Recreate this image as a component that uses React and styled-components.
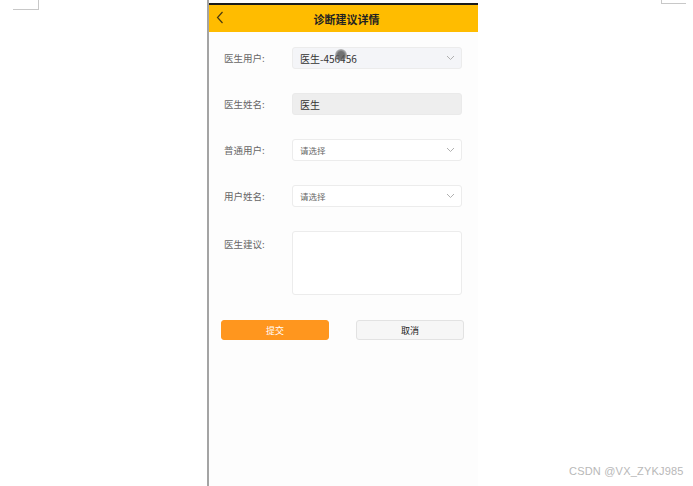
import React from 'react';
import styled, { createGlobalStyle } from 'styled-components';

const GlobalStyle = createGlobalStyle`
  html, body {
    margin: 0;
    padding: 0;
    background: #ffffff;
  }
  body {
    font-family: "Noto Sans CJK SC", "Noto Sans", sans-serif;
  }
`;

const Stage = styled.div`
  position: relative;
  width: 693px;
  height: 486px;
  overflow: hidden;
  background: #ffffff;
`;

const CornerMark = styled.div`
  position: absolute;
  top: 0;
  ${({ side }) => (side === 'left' ? 'left: 13px;' : 'left: 661px;')}
  width: ${({ side }) => (side === 'left' ? '25px' : '24px')};
  height: ${({ side }) => (side === 'left' ? '9px' : '3px')};
  border-bottom: 1px solid #c8c8c8;
  ${({ side }) =>
    side === 'left' ? 'border-right: 1px solid #c8c8c8;' : 'border-left: 1px solid #c8c8c8;'}
`;

const Phone = styled.div`
  margin-left: 207px;
  padding-top: 3px;
  width: 271px;
  height: 486px;
  box-sizing: border-box;
  border-left: 2px solid #a4a4a4;
  display: flex;
  flex-direction: column;
  background: #fdfdfd;
`;

const Header = styled.header`
  height: 27px;
  flex-shrink: 0;
  border-top: 2px solid #1a1a1a;
  background: #ffbc00;
  display: flex;
  align-items: center;
  position: relative;
  justify-content: center;
`;

const Back = styled.svg`
  position: absolute;
  left: 7px;
  top: 6px;
`;

const Title = styled.h1`
  margin: 0 0 0 6px;
  font-size: 11px;
  font-weight: 700;
  color: #222;
`;

const Form = styled.div`
  display: flex;
  flex-direction: column;
  padding: 15px 16px 0 15px;
  gap: 24px;
`;

const Row = styled.div`
  display: flex;
  align-items: ${({ top }) => (top ? 'flex-start' : 'center')};
`;

const Label = styled.span`
  width: 68px;
  flex-shrink: 0;
  font-size: 9.5px;
  color: #666;
  padding-top: ${({ top }) => (top ? '6px' : '0')};
`;

const Field = styled.div`
  flex: 1;
  height: 22px;
  box-sizing: border-box;
  border: 1px solid ${({ disabled }) => (disabled ? '#eaeaea' : '#ececec')};
  border-radius: 3px;
  background: ${({ disabled, tint }) => (disabled ? '#eeeeee' : tint ? '#f4f5f8' : '#ffffff')};
  display: flex;
  align-items: center;
  justify-content: space-between;
  padding: 0 6px 0 7px;
  font-size: ${({ placeholder }) => (placeholder ? '8.5px' : '10px')};
  color: ${({ placeholder }) => (placeholder ? '#666' : '#333')};
  position: relative;
`;

const TextBox = styled.div`
  flex: 1;
  height: 64px;
  box-sizing: border-box;
  border: 1px solid #ececec;
  border-radius: 3px;
  background: #ffffff;
`;

const Spinner = styled.div`
  position: absolute;
  left: 42px;
  top: 1px;
  width: 12px;
  height: 12px;
  border-radius: 50%;
  background: radial-gradient(circle, rgba(90, 90, 90, 0.85) 40%, rgba(120, 120, 120, 0.35) 75%, transparent 100%);
`;

const Buttons = styled.div`
  display: flex;
  justify-content: space-between;
  padding: 25px 14px 0 12px;
`;

const Button = styled.button`
  width: 108px;
  height: 20px;
  box-sizing: border-box;
  border-radius: 3px;
  font-family: inherit;
  font-size: 9px;
  padding: 0;
  cursor: pointer;
  border: 1px solid ${({ primary }) => (primary ? '#ff961e' : '#e2e2e2')};
  background: ${({ primary }) => (primary ? '#ff961e' : '#f6f6f6')};
  color: ${({ primary }) => (primary ? '#ffffff' : '#222')};
`;

const Watermark = styled.div`
  position: absolute;
  left: 569px;
  top: 465px;
  font-family: "Liberation Sans", sans-serif;
  font-size: 11px;
  color: #b8b8b8;
  letter-spacing: 0.2px;
`;

const Chevron = () => (
  <svg width="9" height="6" viewBox="0 0 9 6">
    <path d="M1 1l3.5 3.5L8 1" fill="none" stroke="#b0b0b0" strokeWidth="1" />
  </svg>
);

const App = () => (
  <Stage>
    <GlobalStyle />
    <CornerMark side="left" />
    <CornerMark side="right" />
    <Phone>
      <Header>
        <Back width="8" height="13" viewBox="0 0 8 13">
          <path d="M6.5 1L1.5 6.5l5 5.5" fill="none" stroke="#4a3a10" strokeWidth="1.2" />
        </Back>
        <Title>诊断建议详情</Title>
      </Header>
      <Form>
        <Row>
          <Label>医生用户:</Label>
          <Field tint>
            <span>医生-456456</span>
            <Chevron />
            <Spinner />
          </Field>
        </Row>
        <Row>
          <Label>医生姓名:</Label>
          <Field disabled>
            <span>医生</span>
          </Field>
        </Row>
        <Row>
          <Label>普通用户:</Label>
          <Field placeholder="true">
            <span>请选择</span>
            <Chevron />
          </Field>
        </Row>
        <Row>
          <Label>用户姓名:</Label>
          <Field placeholder="true">
            <span>请选择</span>
            <Chevron />
          </Field>
        </Row>
        <Row top="true">
          <Label top="true">医生建议:</Label>
          <TextBox />
        </Row>
      </Form>
      <Buttons>
        <Button primary="true">提交</Button>
        <Button>取消</Button>
      </Buttons>
    </Phone>
    <Watermark>CSDN @VX_ZYKJ985</Watermark>
  </Stage>
);

export default App;
